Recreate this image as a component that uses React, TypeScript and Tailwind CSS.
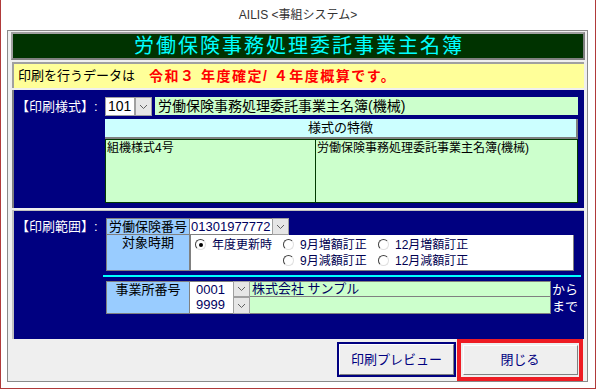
const jp = { fontFamily: '"Liberation Sans", "Noto Sans CJK JP", sans-serif' };

function DropButton({ h = 18 }: { h?: number }) {
  return (
    <div
      className="flex w-[17px] items-center justify-center border border-[#a0a0a0] bg-[#e6e6e6]"
      style={{ height: h }}
    >
      <svg width="9" height="6" viewBox="0 0 9 6">
        <path d="M1 1 L4.5 4.5 L8 1" fill="none" stroke="#606060" strokeWidth="1" />
      </svg>
    </div>
  );
}

function Radio({ checked, label }: { checked?: boolean; label: string }) {
  return (
    <div className="flex items-center gap-[6px]">
      <span className="relative flex h-[11px] w-[11px] items-center justify-center rounded-full border border-t-[#404040] border-l-[#404040] border-r-[#e0e0e0] border-b-[#e0e0e0] bg-white">
        {checked && <span className="h-[4px] w-[4px] rounded-full bg-black" />}
      </span>
      <span className="text-[12px] leading-[14px] text-[#000050]">{label}</span>
    </div>
  );
}

export default function App() {
  return (
    <div
      className="flex h-[389px] w-[596px] flex-col border-x border-b border-[#b03a3a] bg-white"
      style={jp}
    >
      <div className="flex h-[30px] items-center justify-center text-[12px] text-[#333]">
        AILIS &lt;事組システム&gt;
      </div>

      <div className="ml-[6px] flex h-[352px] w-[581px] flex-col border border-[#8a8a8a] bg-[#efefef] pl-[3px] pr-[2px] pt-[1px]">
        <div className="flex h-[28px] w-[574px] items-center justify-center border-2 border-t-[#a0a0a0] border-l-[#a0a0a0] border-r-[#808080] border-b-[#808080] bg-[#003300] pl-[2px] text-[20px] tracking-[2px] text-[#00ffff]">
          労働保険事務処理委託事業主名簿
        </div>

        <div className="mt-[2px] ml-[1px] flex h-[26px] w-[572px] items-center border-t-2 border-l-2 border-[#a0a0a0] bg-[#ffff99] pl-[4px] text-[13px]">
          <span className="w-[131px] text-black">印刷を行うデータは</span>
          <span className="text-[14px] font-bold tracking-[1.5px] text-[#ff0000]">令和３ 年度確定/ ４年度概算です。</span>
        </div>

        <div className="mt-[2px] ml-[1px] flex h-[118px] w-[572px] flex-col border-l-2 border-[#808080] bg-[#000080]">
          <div className="flex items-start pt-[7px]">
            <div className="w-[91px] pl-[2px] pt-[1px] text-[13px] leading-[18px] text-white">【印刷様式】:</div>
            <div className="flex h-[19px] w-[30px] items-center border border-[#a0a0a0] bg-white pl-[2px] text-[14px]">
              101
            </div>
            <DropButton h={19} />
            <div className="ml-[3px] mr-[6px] flex h-[18px] flex-1 items-center bg-[#ccffcc] pl-[3px] text-[14px] leading-[18px]">
              労働保険事務処理委託事業主名簿(機械)
            </div>
          </div>
          <div className="ml-[91px] mr-[6px] mt-[3px] flex flex-col">
            <div className="flex h-[20px] items-center justify-center border-r-2 border-b-2 border-[#808080] bg-[#ccffff] text-[13px]">
              様式の特徴
            </div>
            <div className="grid h-[64px] grid-cols-[210px_1fr] border border-[#003a00] bg-[#ccffcc] text-[12px] leading-[16px]">
              <div className="border-r border-[#003a00] pl-[1px]">組機様式4号</div>
              <div className="pl-[1px]">労働保険事務処理委託事業主名簿(機械)</div>
            </div>
          </div>
        </div>

        <div className="ml-[1px] mt-[2px] flex h-[129px] w-[572px] flex-col border-l-2 border-t border-[#c0c0c0] bg-[#000080]">
          <div className="flex items-start pt-[7px]">
            <div className="w-[92px] pl-[2px] text-[13px] leading-[18px] text-white">【印刷範囲】:</div>
            <div className="flex flex-col">
              <div className="flex">
                <div className="flex h-[17px] w-[84px] items-center justify-center border border-[#808080] bg-[#99ccff] text-[13px]">
                  労働保険番号
                </div>
                <div className="flex h-[17px] w-[82px] items-center border-y border-[#808080] bg-white pl-[1px] text-[13px] text-[#000060]">
                  01301977772
                </div>
                <DropButton h={17} />
              </div>
              <div className="flex">
                <div className="flex h-[36px] w-[84px] justify-center border border-t-0 border-[#808080] bg-[#99ccff] text-[13px] leading-[16px]">
                  対象時期
                </div>
                <div className="flex h-[36px] w-[384px] flex-col justify-center gap-[2px] border border-t-0 border-[#808080] bg-white pl-[4px]">
                  <div className="flex">
                    <div className="w-[88px]"><Radio checked label="年度更新時" /></div>
                    <div className="w-[95px]"><Radio label="9月増額訂正" /></div>
                    <Radio label="12月増額訂正" />
                  </div>
                  <div className="flex">
                    <div className="w-[88px]" />
                    <div className="w-[95px]"><Radio label="9月減額訂正" /></div>
                    <Radio label="12月減額訂正" />
                  </div>
                </div>
              </div>
            </div>
          </div>

          <div className="ml-[89px] mr-[3px] mt-[4px] h-[2px] bg-[#00ffff]" />

          <div className="ml-[92px] mt-[4px] flex">
            <div className="flex h-[33px] w-[84px] justify-center border border-[#808080] bg-[#99ccff] text-[13px] leading-[16px]">
              事業所番号
            </div>
            <div className="flex flex-col">
              <div className="flex h-[16px]">
                <div className="flex w-[43px] items-center border-t border-[#808080] bg-white pl-[6px] text-[13px] text-[#000060]">0001</div>
                <DropButton h={16} />
                <div className="flex w-[301px] items-center border-y border-r border-[#808080] bg-[#ccffcc] pl-[2px] text-[13px] text-[#000060]">
                  株式会社 サンプル
                </div>
              </div>
              <div className="flex h-[17px]">
                <div className="flex w-[43px] items-center border-b border-[#808080] bg-white pl-[6px] text-[13px] text-[#000060]">9999</div>
                <DropButton h={17} />
                <div className="w-[301px] border-b border-r border-[#808080] bg-[#ccffcc]" />
              </div>
            </div>
            <div className="flex flex-col pl-[1px] text-[13px] leading-[17px] text-white">
              <span>から</span>
              <span>まで</span>
            </div>
          </div>
        </div>

        <div className="flex flex-1 items-start justify-end pr-[2px]">
          <div className="mt-[3px] flex h-[35px] w-[119px] items-center justify-center border-2 border-[#000080] bg-[#efefef]">
            <div className="flex h-full w-full items-center justify-center border border-t-white border-l-white border-r-[#808080] border-b-[#808080] text-[13px] text-[#000080]">
              印刷プレビュー
            </div>
          </div>
          <div className="ml-[1px] flex h-[42px] w-[126px] items-center justify-center border-[4px] border-[#ee1c24]">
            <div className="flex h-[30px] w-[115px] items-center justify-center border border-t-white border-l-white border-r-[#808080] border-b-[#808080] bg-[#efefef] text-[13px] text-[#000080]">
              閉じる
            </div>
          </div>
        </div>
      </div>
    </div>
  );
}
